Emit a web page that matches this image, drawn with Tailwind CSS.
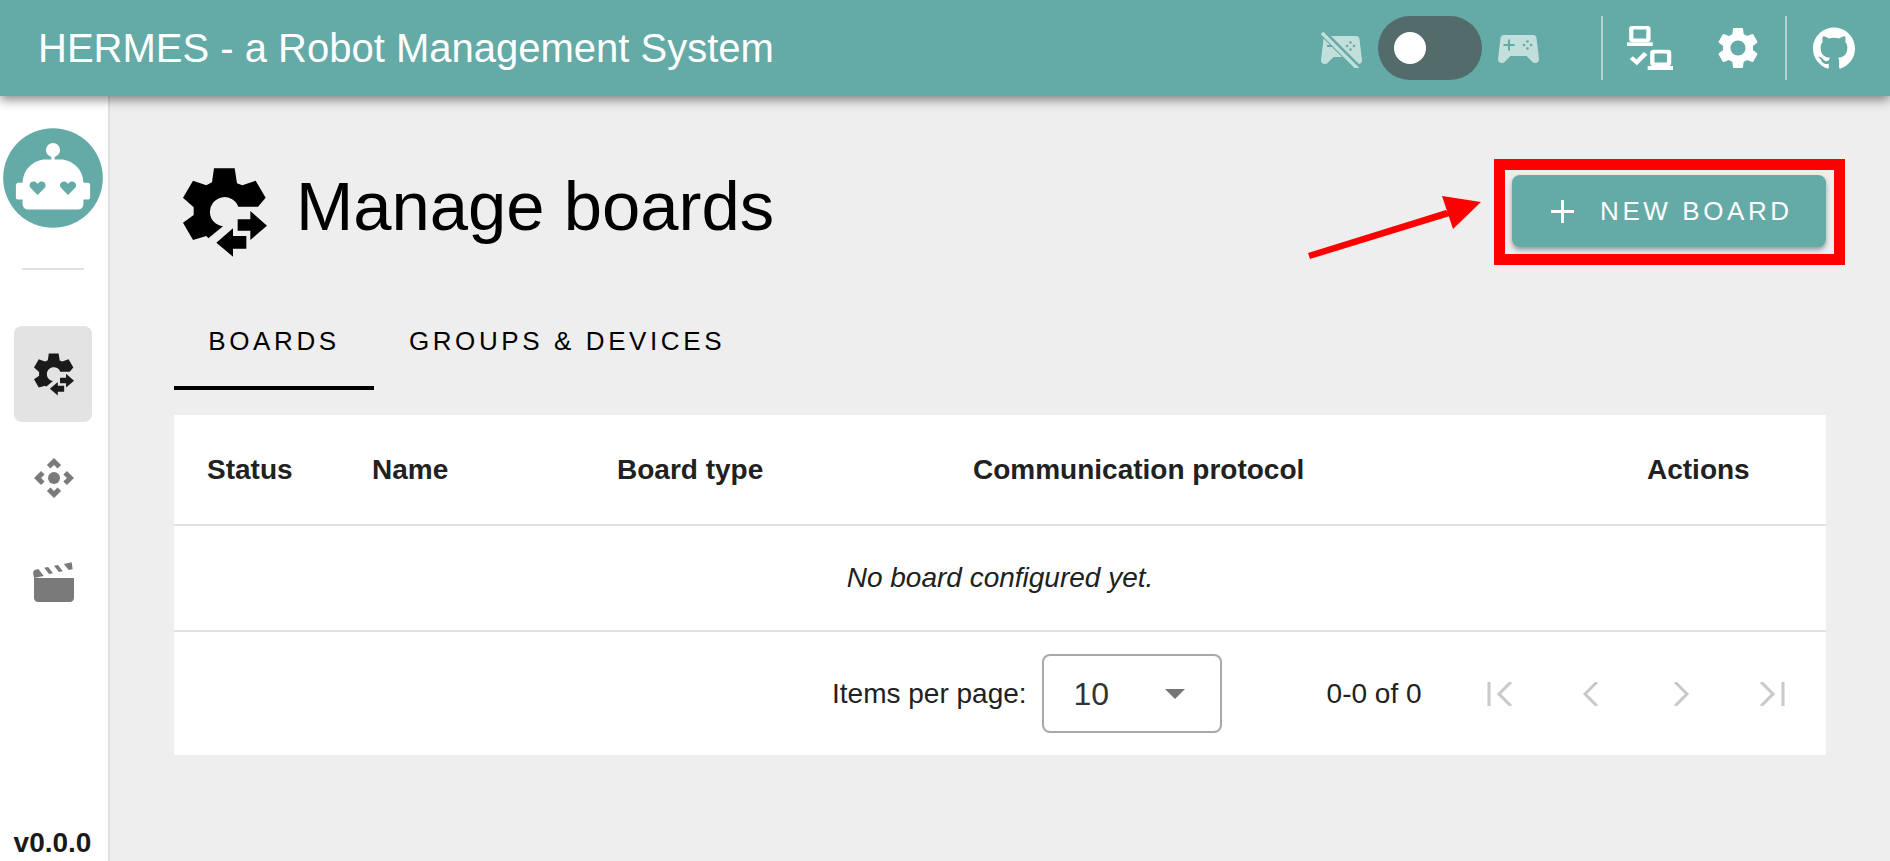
<!doctype html>
<html>
<head>
<meta charset="utf-8">
<script src="https://cdn.jsdelivr.net/npm/@tailwindcss/browser@4"></script>
</head>
<body class="h-screen overflow-hidden bg-[#eeeeee] font-['Liberation_Sans',Arial,sans-serif] text-black">
<header class="relative z-10 flex h-24 items-center bg-[#64aaa6] shadow-[0_4px_10px_rgba(0,0,0,0.45)]">
  <div class="pl-[38px] text-[40px] leading-none text-white">HERMES - a Robot Management System</div>
  <div class="ml-auto flex h-16 items-center">
    <svg class="mt-1 h-9 w-[43px] fill-[#c3dfdc]" viewBox="-1 -4 43 36"><path d="M6 0H35Q38 0 38.500 3L41 24Q41 28 37 28Q35 28 34 26.500L28.500 21H12.500L7 26.500Q6 28 4 28Q0 28 0 24L2.500 3Q3 0 6 0Z"/><g fill="#64aaa6"><circle cx="29.500" cy="6.500" r="1.300"/><circle cx="26" cy="10" r="1.300"/><circle cx="33" cy="10" r="1.300"/><circle cx="29.500" cy="13.500" r="1.300"/><path d="M10 6h2v5h-2zM6 9h5v2H6z"/></g><path d="M2 -3L38 33" stroke="#64aaa6" stroke-width="7"/><path d="M1 -3L37 33" stroke="#c3dfdc" stroke-width="3.500"/></svg>
    <div class="ml-[15px] flex h-16 w-[104px] items-center rounded-full bg-[#536b6a] pl-4"><div class="h-8 w-8 rounded-full bg-white"></div></div>
    <svg class="ml-4 mt-0.5 h-7 w-[41px] fill-[#c3dfdc]" viewBox="0 0 41 28"><path d="M6 0H35Q38 0 38.500 3L41 24Q41 28 37 28Q35 28 34 26.500L28.500 21H12.500L7 26.500Q6 28 4 28Q0 28 0 24L2.500 3Q3 0 6 0Z"/><g fill="#64aaa6"><circle cx="29.500" cy="6.500" r="1.300"/><circle cx="26" cy="10" r="1.300"/><circle cx="33" cy="10" r="1.300"/><circle cx="29.500" cy="13.500" r="1.300"/><path d="M10 4.500h2v11h-2zM5.500 9h11v2h-11z"/></g></svg>
    <div class="ml-[62px] h-16 w-0.5 bg-white/50"></div>
    <svg class="ml-6 h-11 w-[46px]" preserveAspectRatio="none" viewBox="882 78 118 132"><g fill="none" stroke="#fff" stroke-width="11"><rect x="893" y="83" width="44" height="38" rx="3"/><rect x="947" y="155" width="43" height="38" rx="3"/><path d="M893 173l14 14 23-27" stroke-width="12"/></g><g fill="#fff"><rect x="882" y="127" width="66" height="11"/><rect x="935" y="198" width="65" height="12"/></g></svg>
    <svg class="ml-10 h-[50px] w-[50px] fill-white" viewBox="0 0 24 24"><path d="M19.14 12.94c.04-.3.06-.61.06-.94 0-.32-.02-.64-.07-.94l2.03-1.58c.18-.14.23-.41.12-.61l-1.92-3.32c-.12-.22-.37-.29-.59-.22l-2.39.96c-.5-.38-1.03-.7-1.62-.94l-.36-2.54c-.04-.24-.24-.41-.48-.41h-3.84c-.24 0-.43.17-.47.41l-.36 2.54c-.59.24-1.13.57-1.62.94l-2.39-.96c-.22-.08-.47 0-.59.22L2.74 8.87c-.12.21-.08.47.12.61l2.03 1.58c-.05.3-.09.63-.09.94s.02.64.07.94l-2.03 1.58c-.18.14-.23.41-.12.61l1.92 3.32c.12.22.37.29.59.22l2.39-.96c.5.38 1.03.7 1.62.94l.36 2.54c.05.24.24.41.48.41h3.84c.24 0 .44-.17.47-.41l.36-2.54c.59-.24 1.13-.56 1.62-.94l2.39.96c.22.08.47 0 .59-.22l1.92-3.32c.12-.22.07-.47-.12-.61l-2.01-1.58zM12 15.6c-1.98 0-3.6-1.62-3.6-3.6s1.62-3.6 3.6-3.6 3.6 1.62 3.6 3.6-1.62 3.6-3.6 3.6z"/></svg>
    <div class="ml-[22px] h-16 w-0.5 bg-white/50"></div>
    <svg class="ml-[26px] mr-[35px] h-[42px] w-[42px] fill-white" viewBox="0 0 24 24"><path d="M12 .297c-6.63 0-12 5.373-12 12 0 5.303 3.438 9.8 8.205 11.385.6.113.82-.258.82-.577 0-.285-.01-1.04-.015-2.04-3.338.724-4.042-1.61-4.042-1.61C4.422 18.07 3.633 17.7 3.633 17.7c-1.087-.744.084-.729.084-.729 1.205.084 1.838 1.236 1.838 1.236 1.07 1.835 2.809 1.305 3.495.998.108-.776.417-1.305.76-1.605-2.665-.3-5.466-1.332-5.466-5.93 0-1.31.465-2.38 1.235-3.22-.135-.303-.54-1.523.105-3.176 0 0 1.005-.322 3.3 1.23.96-.267 1.98-.399 3-.405 1.02.006 2.04.138 3 .405 2.28-1.552 3.285-1.23 3.285-1.23.645 1.653.24 2.873.12 3.176.765.84 1.23 1.91 1.23 3.22 0 4.61-2.805 5.625-5.475 5.92.42.36.81 1.096.81 2.22 0 1.606-.015 2.896-.015 3.286 0 .315.21.69.825.57C20.565 22.092 24 17.592 24 12.297c0-6.627-5.373-12-12-12"/></svg>
  </div>
</header>
<div class="flex h-[765px]">
  <aside class="flex w-[110px] shrink-0 flex-col items-center border-r-2 border-[#e0e0e0] bg-white pt-8">
    <svg class="-ml-[2px] h-[100px] w-[100px]" viewBox="10 84 298 299">
      <circle cx="159" cy="233.500" r="149" fill="#64aaa6"/>
      <g fill="#fff"><circle cx="159" cy="150" r="21"/><rect x="154" y="165" width="10" height="20"/><path d="M68 310V250C68 205 105 178 135 178H183C213 178 250 205 250 250V310Q250 328 232 328H86Q68 328 68 310Z"/><rect x="48" y="248" width="30" height="50" rx="8"/><rect x="240" y="248" width="30" height="50" rx="8"/></g>
      <path fill="#64aaa6" d="M113 284L91 262C84 250 97 240 106 245L113 251L120 245C129 240 142 250 135 262Z"/>
      <path fill="#64aaa6" d="M204 284L182 262C175 250 188 240 197 245L204 251L211 245C220 240 233 250 226 262Z"/>
    </svg>
    <div class="mt-10 -ml-[2px] h-0.5 w-[62px] bg-[#e0e0e0]"></div>
    <div class="mt-14 -ml-[3px] flex h-24 w-[78px] items-center justify-center rounded-lg bg-[#e3e3e3] pl-[2px]">
      <svg class="h-[43px] w-10 fill-[#1a1a1a]" viewBox="70 55 252 265"><path d="M163 55H225L232 100L248 106L288 92L318 143L295 170H236A44 44 0 1 0 190 229L146 265L140 258L100 270L70 218L102 195V172L70 143L100 92L140 106L157 97Z"/><path d="M234 208H272V183L322 227L272 270V242H234ZM260 258V296H220V320L170 278L220 235V258Z"/></svg>
    </div>
    <svg class="mt-8 -ml-[1px] h-12 w-12 fill-[#7a7a7a]" viewBox="0 0 24 24"><path d="M15.54 5.54L13.77 7.3 12 5.54 10.23 7.3 8.46 5.54 12 2l3.54 3.54zm2.92 10l-1.76-1.77L18.46 12l-1.76-1.77 1.76-1.77L22 12l-3.54 3.54zm-10 2.92l1.77-1.76L12 18.46l1.77-1.76 1.77 1.76L12 22l-3.54-3.54zm-2.92-10l1.76 1.77L5.54 12l1.76 1.77-1.76 1.77L2 12l3.54-3.54z"/><circle cx="12" cy="12" r="3"/></svg>
    <svg class="mt-[56px] -ml-[1px] h-12 w-12 fill-[#7a7a7a]" viewBox="0 0 24 24"><path d="M20.84 2.18L16.91 2.96L19.36 6.05L21.33 5.66L20.84 2.18M13.97 3.54L12 3.93L14.45 7.03L16.42 6.64L13.97 3.54M9.07 4.5L7.1 4.91L9.56 8L11.5 7.62L9.07 4.5M4.16 5.5L3.18 5.69A2 2 0 0 0 1.61 8.04L2 10L6.9 9.03L4.16 5.5M2 10V20C2 21.11 2.9 22 4 22H20C21.11 22 22 21.11 22 20V10H2Z"/></svg>
    <div class="mt-auto -ml-[3px] pb-[4px] text-[28px] font-bold leading-7 text-[#1a1a1a]">v0.0.0</div>
  </aside>
  <main class="relative flex-1 px-16 pt-[72px]">
    <div class="flex h-[89px] items-center justify-between">
      <div class="flex items-center">
        <svg class="ml-[9px] h-[89px] w-[84px] fill-black" viewBox="70 55 252 265"><path d="M163 55H225L232 100L248 106L288 92L318 143L295 170H236A44 44 0 1 0 190 229L146 265L140 258L100 270L70 218L102 195V172L70 143L100 92L140 106L157 97Z"/><path d="M234 208H272V183L322 227L272 270V242H234ZM260 258V296H220V320L170 278L220 235V258Z"/></svg>
        <h1 class="ml-[29px] -mt-[10px] text-[68.800px] font-normal leading-none">Manage boards</h1>
      </div>
      <div class="relative mb-[3px]">
        <button class="flex h-[72px] w-[314px] items-center rounded-lg bg-[#64aaa6] pl-[39px] text-[26px] tracking-[3.600px] text-white shadow-[0_3px_5px_rgba(0,0,0,0.35)]">
          <svg class="mr-[26px] h-[23px] w-[23px] stroke-white" viewBox="0 0 24 24" stroke-width="3"><path d="M12 0V24M0 12H24"/></svg>NEW BOARD
        </button>
        <div class="absolute -bottom-[18px] -left-[18px] -right-[19px] -top-[16px] border-[11px] border-[#ff0000]"></div>
      </div>
    </div>
    <svg class="absolute left-[1198px] top-[100px] h-16 w-[173px]" viewBox="1308 196 173 64" fill="#ff0000"><path d="M1308 253L1446 210L1450 216L1310 259Z"/><path d="M1442 196L1481 202L1453 229Z"/></svg>
    <nav class="mt-[60px] flex h-[73px] text-[26px] tracking-[3.600px]">
      <div class="flex w-[200px] items-center justify-center border-b-4 border-black pb-5">BOARDS</div>
      <div class="flex w-[386px] items-center justify-center border-b-4 border-transparent pb-5">GROUPS &amp; DEVICES</div>
    </nav>
    <section class="mt-[25px] bg-white">
      <table class="w-full table-fixed border-collapse text-[28px] text-[#212121]">
        <colgroup><col class="w-[165px]"><col class="w-[245px]"><col class="w-[356px]"><col class="w-[674px]"><col class="w-[212px]"></colgroup>
        <thead>
          <tr class="h-[110px] border-b-2 border-[#e0e0e0] text-left font-bold">
            <th class="pl-[33px]">Status</th><th class="pl-[33px]">Name</th><th class="pl-[33px]">Board type</th><th class="pl-[33px]">Communication protocol</th><th class="pl-[33px]">Actions</th>
          </tr>
        </thead>
        <tbody>
          <tr class="h-[106px] border-b-2 border-[#e0e0e0]"><td colspan="5" class="text-center italic">No board configured yet.</td></tr>
        </tbody>
      </table>
      <div class="flex h-[123px] items-center text-[28px] text-[#212121]">
        <span class="ml-[658px]">Items per page:</span>
        <div class="ml-[15px] flex h-[79px] w-[180px] items-center rounded-lg border-2 border-[#a8a8a8] pl-[30px] pr-[35px] text-[32px] text-[#333]">10<span class="ml-auto h-0 w-0 border-x-[10px] border-t-[10px] border-x-transparent border-t-[#757575]"></span></div>
        <span class="ml-[105px]">0-0 of 0</span>
        <svg class="ml-[65px] h-6 w-[25px] fill-none stroke-[#c8c8c8] stroke-[3]" viewBox="0 0 25 24"><path d="M2 0V24M24 0L12 12L24 24"/></svg>
        <svg class="ml-[71px] h-6 w-[15px] fill-none stroke-[#c8c8c8] stroke-[3]" viewBox="0 0 15 24"><path d="M14 0L2 12L14 24"/></svg>
        <svg class="ml-[76px] h-6 w-[15px] fill-none stroke-[#c8c8c8] stroke-[3]" viewBox="0 0 15 24"><path d="M1 0L13 12L1 24"/></svg>
        <svg class="ml-[71px] h-6 w-[25px] fill-none stroke-[#c8c8c8] stroke-[3]" viewBox="0 0 25 24"><path d="M23 0V24M1 0L13 12L1 24"/></svg>
      </div>
    </section>
  </main>
</div>
</body>
</html>
